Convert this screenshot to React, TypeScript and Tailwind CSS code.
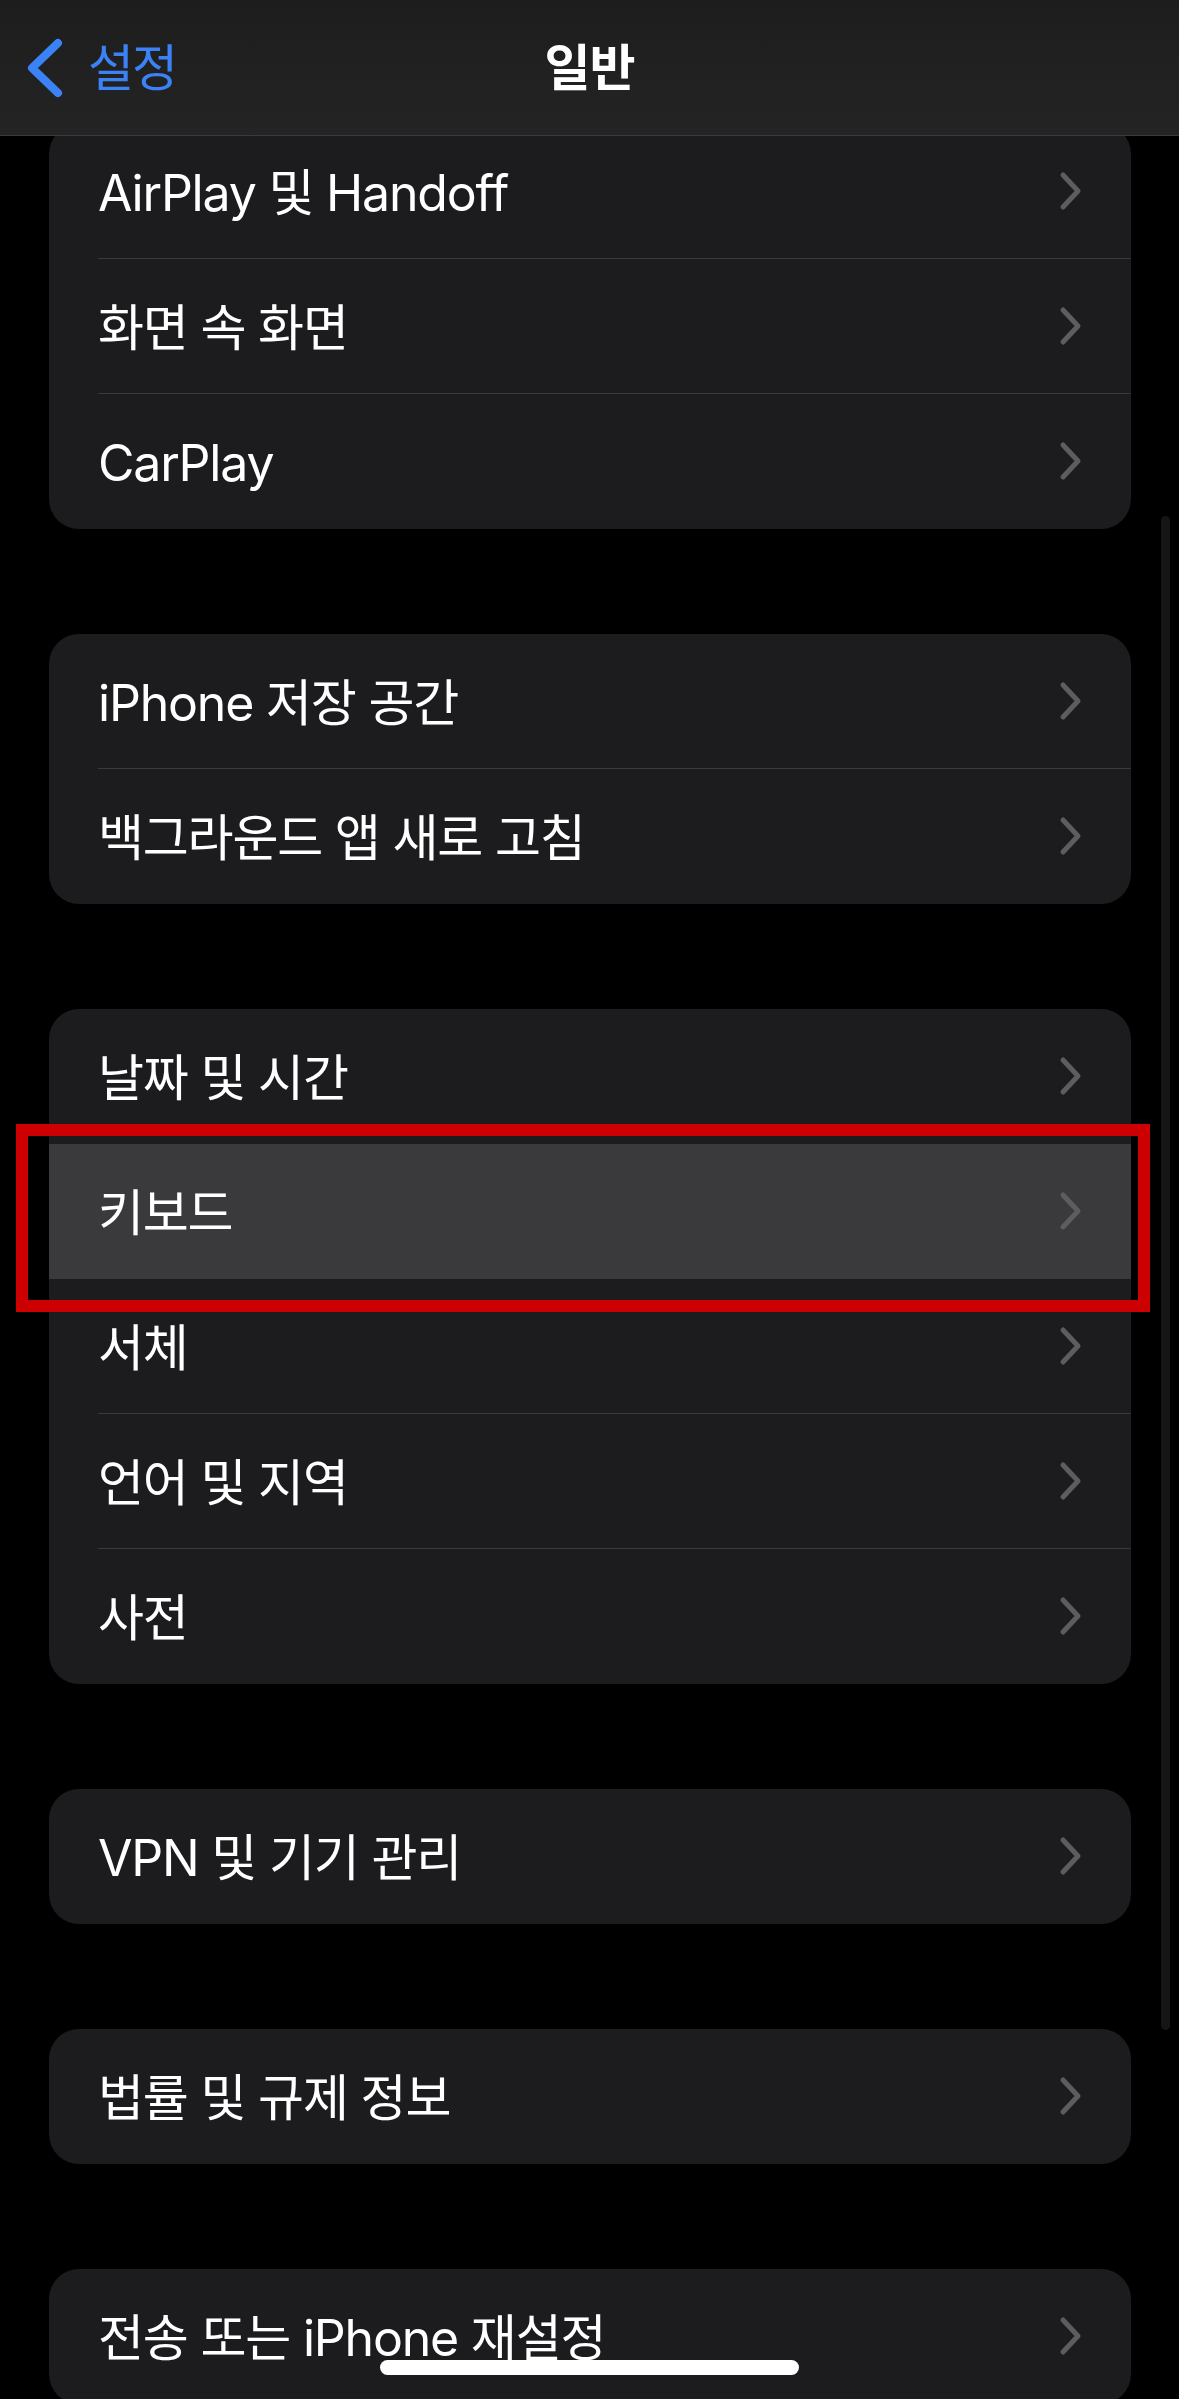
import React from 'react'

/**
 * One settings row inside a grouped card
 */
interface Row {
  label: string
  highlighted?: boolean
}

const groups: Row[][] = [
  [{ label: 'AirPlay 및 Handoff' }, { label: '화면 속 화면' }, { label: 'CarPlay' }],
  [{ label: 'iPhone 저장 공간' }, { label: '백그라운드 앱 새로 고침' }],
  [
    { label: '날짜 및 시간' },
    { label: '키보드', highlighted: true },
    { label: '서체' },
    { label: '언어 및 지역' },
    { label: '사전' }
  ],
  [{ label: 'VPN 및 기기 관리' }],
  [{ label: '법률 및 규제 정보' }],
  [{ label: '전송 또는 iPhone 재설정' }]
]

const font = { fontFamily: '"Inter", "Noto Sans CJK KR", sans-serif' }

const Chevron = () => (
  <svg width="24" height="40" viewBox="0 0 24 40" className="shrink-0">
    <path
      d="M4 4 L19 20 L4 36"
      fill="none"
      stroke="#5d5d61"
      strokeWidth="5"
      strokeLinecap="round"
      strokeLinejoin="round"
    />
  </svg>
)

const SettingsRow: React.FC<{ row: Row; showDivider: boolean }> = ({ row, showDivider }) => (
  <div className={`h-[135px] flex flex-col ${row.highlighted ? 'bg-[#3a3a3c]' : ''}`}>
    <div className="flex-1 flex items-center pl-[49px] pr-[48px]">
      <span className="flex-1 text-white text-[50px] tracking-[-1.2px] leading-none pt-[3px]">{row.label}</span>
      <Chevron />
    </div>
    {/* Divider starts under the label, like iOS inset separators */}
    <div className={`h-px ml-[49px] ${showDivider ? 'bg-[#3a3a3d]' : 'bg-transparent'}`} />
  </div>
)

export default function App() {
  return (
    <div className="relative w-[1179px] h-[2399px] bg-black overflow-hidden" style={font}>
      {/* Scrolling list */}
      <div className="flex flex-col gap-[105px] pt-[124px]">
        {groups.map((rows, gi) => (
          <div key={gi} className="ml-[49px] w-[1082px] rounded-[30px] bg-[#1c1c1e] overflow-hidden">
            {rows.map((row, ri) => {
              const next = rows[ri + 1]
              const showDivider = !!next && !row.highlighted && !next.highlighted
              return <SettingsRow key={ri} row={row} showDivider={showDivider} />
            })}
          </div>
        ))}
      </div>

      {/* Navigation bar */}
      <div className="absolute top-0 left-0 w-full h-[136px] bg-gradient-to-b from-[#1d1d1d] to-[#242424] border-b border-[#3a3a3a] flex items-center">
        <div className="flex items-center pl-[26px] gap-[24px]">
          <svg width="38" height="60" viewBox="0 0 38 60">
            <path
              d="M32 5 L6 30 L32 55"
              fill="none"
              stroke="#3b82f6"
              strokeWidth="8"
              strokeLinecap="round"
              strokeLinejoin="round"
            />
          </svg>
          <span className="text-[#3b82f6] text-[50px] tracking-[-2px] leading-none">설정</span>
        </div>
        <span className="absolute left-1/2 -translate-x-1/2 text-white text-[50px] font-semibold tracking-[-1px] leading-none">
          일반
        </span>
      </div>

      {/* Scroll indicator */}
      <div className="absolute left-[1161px] top-[516px] w-[9px] h-[1514px] rounded-full bg-[#151515]" />

      {/* Annotation around the keyboard row */}
      <div className="absolute left-[16px] top-[1124px] w-[1134px] h-[188px] border-[12px] border-[#cc0000]" />

      {/* Home indicator */}
      <div className="absolute left-[380px] top-[2360px] w-[419px] h-[15px] rounded-full bg-white" />
    </div>
  )
}
